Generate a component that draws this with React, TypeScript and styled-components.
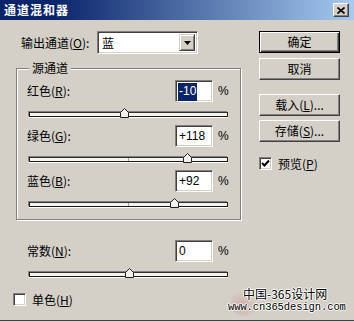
import React from "react";
import styled, { createGlobalStyle } from "styled-components";

const FACE = "#d4d0c8";
const CJK = `"Noto Sans CJK SC", "Liberation Sans", sans-serif`;
const LAT = `"Liberation Sans", "Noto Sans CJK SC", sans-serif`;

const Global = createGlobalStyle`
  html, body { margin: 0; padding: 0; background: ${FACE}; }
  body { font-family: ${CJK}; font-size: 12px; color: #000; }
  * { box-sizing: border-box; }
  u { text-decoration: underline; text-underline-offset: 1px; }
`;

const Window = styled.div`
  position: relative;
  width: 354px;
  height: 321px;
  background: ${FACE};
  display: flex;
  flex-direction: column;
  overflow: hidden;
  border-bottom: 1px solid #404040;
`;

const TitleBar = styled.div`
  height: 20px;
  flex: none;
  display: flex;
  align-items: center;
  justify-content: space-between;
  padding: 0 5px 0 4px;
  background: linear-gradient(to right, #0a246a 0%, #0a246a 15%, #a6caf0 100%);
`;

const Title = styled.div`
  color: #fff;
  font-weight: bold;
  font-size: 12px;
  letter-spacing: 1px;
  line-height: 14px;
`;

const CloseButton = styled.div`
  width: 16px;
  height: 14px;
  background: ${FACE};
  border: 1px solid;
  border-color: #fff #404040 #404040 #fff;
  box-shadow: inset -1px -1px 0 #808080;
  display: flex;
  align-items: center;
  justify-content: center;
`;

const Body = styled.div`
  display: flex;
  padding: 11px 0 0 13px;
`;

const LeftPane = styled.div`
  width: 229px;
  display: flex;
  flex-direction: column;
`;

const RightPane = styled.div`
  width: 81px;
  margin-left: 17px;
  display: flex;
  flex-direction: column;
`;

const OutputRow = styled.div`
  display: flex;
  align-items: center;
  height: 23px;
  padding-left: 8px;
`;

const LabelCell = styled.div<{ $w: number }>`
  width: ${(p) => p.$w}px;
  flex: none;
  white-space: nowrap;
  line-height: 14px;
`;

const Select = styled.div`
  width: 101px;
  height: 23px;
  display: flex;
  background: #fff;
  border: 1px solid;
  border-color: #808080 #fff #fff #808080;
  box-shadow: inset 1px 1px 0 #404040, inset -1px -1px 0 ${FACE};
  padding: 2px;
`;

const SelectValue = styled.div`
  flex: 1;
  padding-left: 2px;
  line-height: 17px;
`;

const SelectArrow = styled.div`
  width: 16px;
  background: ${FACE};
  border: 1px solid;
  border-color: ${FACE} #404040 #404040 ${FACE};
  box-shadow: inset 1px 1px 0 #fff, inset -1px -1px 0 #808080;
  display: flex;
  align-items: center;
  justify-content: center;
`;

const GroupBox = styled.div`
  position: relative;
  margin: 14px 0 0 3px;
  width: 225px;
  border: 1px solid #808080;
  box-shadow: inset 1px 1px 0 #fff, 1px 1px 0 #fff;
  padding: 11px 0 4px 10px;
`;

const Legend = styled.div`
  position: absolute;
  top: -8px;
  left: 12px;
  padding: 0 3px;
  background: ${FACE};
  line-height: 14px;
`;

const Block = styled.div<{ $h?: number }>`
  height: ${(p) => (p.$h ? `${p.$h}px` : "auto")};
  display: flex;
  flex-direction: column;
`;

const ValueRow = styled.div`
  display: flex;
  align-items: center;
  height: 22px;
`;

const NumBox = styled.div`
  width: 38px;
  height: 22px;
  flex: none;
  background: #fff;
  border: 1px solid;
  border-color: #808080 #fff #fff #808080;
  box-shadow: inset 1px 1px 0 #404040, inset -1px -1px 0 ${FACE};
  padding: 2px 0 0 2px;
  font-family: ${LAT};
  font-size: 12px;
  line-height: 16px;
  display: flex;
`;

const Selected = styled.span`
  background: #0a246a;
  color: #fff;
  padding: 0 1px;
`;

const Plain = styled.span`
  padding: 0 1px;
`;

const Percent = styled.div`
  margin-left: 5px;
  font-family: ${LAT};
  font-size: 12px;
`;

const SliderArea = styled.div`
  position: relative;
  margin: 6px 0 0 2px;
  width: 199px;
  height: 12px;
  padding-top: 4px;
`;

const Track = styled.div`
  position: relative;
  height: 5px;
  background: #f4f3ef;
  border: 1px solid #1a1a1a;
  border-top-color: #303030;
  box-shadow: 0 1px 0 #fff, -1px -1px 0 #808080;
`;

const CenterTick = styled.div`
  position: absolute;
  left: 98px;
  top: 0;
  width: 1px;
  height: 3px;
  background: #a0a0a0;
`;

const Thumb = styled.svg`
  position: absolute;
  top: 0;
  width: 9px;
  height: 10px;
`;

const ConstantBlock = styled.div`
  margin-top: 20px;
  padding-left: 14px;
  display: flex;
  flex-direction: column;
`;

const CheckRow = styled.div<{ $mt: number; $pl?: number }>`
  display: flex;
  align-items: center;
  margin-top: ${(p) => p.$mt}px;
  padding-left: ${(p) => p.$pl ?? 0}px;
  height: 13px;
`;

const CheckBox = styled.div`
  width: 13px;
  height: 13px;
  background: #fff;
  border: 1px solid;
  border-color: #808080 #fff #fff #808080;
  box-shadow: inset 1px 1px 0 #404040, inset -1px -1px 0 ${FACE};
  display: flex;
  align-items: center;
  justify-content: center;
`;

const CheckLabel = styled.div`
  margin-left: 6px;
  line-height: 14px;
`;

const Button = styled.div<{ $mt: number; $default?: boolean }>`
  height: 22px;
  margin-top: ${(p) => p.$mt}px;
  display: flex;
  align-items: center;
  justify-content: center;
  line-height: 14px;
  border: 1px solid;
  border-color: ${(p) => (p.$default ? "#000" : "#fff #404040 #404040 #fff")};
  box-shadow: ${(p) =>
    p.$default
      ? "inset 1px 1px 0 #fff, inset -1px -1px 0 #404040, inset -2px -2px 0 #808080"
      : `inset -1px -1px 0 #808080, inset 1px 1px 0 ${FACE}`};
`;

const Watermark = styled.div`
  position: absolute;
  left: 228px;
  top: 286px;
  width: 124px;
  display: flex;
  flex-direction: column;
  align-items: flex-start;
`;

const WmGhost = styled.div`
  position: absolute;
  left: 2px;
  top: 4px;
  width: 30px;
  height: 26px;
  border-radius: 50%;
  background: radial-gradient(circle at 40% 60%, rgba(200, 120, 110, 0.35), rgba(200, 120, 110, 0) 70%);
`;

const WmTitle = styled.div`
  position: relative;
  margin-left: 15px;
  font-size: 12px;
  line-height: 15px;
  text-shadow: 1px 0 0 #fff, -1px 0 0 #fff, 0 1px 0 #fff, 0 -1px 0 #fff;
`;

const WmUrl = styled.div`
  position: relative;
  font-family: "Liberation Mono", monospace;
  font-size: 10.5px;
  line-height: 12px;
  letter-spacing: -0.1px;
  text-shadow: 1px 0 0 #fff, -1px 0 0 #fff, 0 1px 0 #fff, 0 -1px 0 #fff;
`;

type Channel = { name: string; key: string; value: string; num: number; selected?: boolean };

const channels: Channel[] = [
  { name: "红色", key: "R", value: "-10", num: -10, selected: true },
  { name: "绿色", key: "G", value: "+118", num: 118 },
  { name: "蓝色", key: "B", value: "+92", num: 92 },
];

function Slider({ value }: { value: number }) {
  const left = Math.round(((value + 200) / 400) * 199) - 4;
  return (
    <SliderArea>
      <Track>
        <CenterTick />
      </Track>
      <Thumb viewBox="0 0 9 10" style={{ left }}>
        <polygon points="0.5,9.5 0.5,4.5 4.5,0.5 8.5,4.5 8.5,9.5" fill="#f2f0ec" stroke="#202020" strokeWidth="1" />
      </Thumb>
    </SliderArea>
  );
}

function Check() {
  return (
    <svg width="9" height="9" viewBox="0 0 9 9">
      <path d="M1 4 L3.5 6.5 L8 1.5" fill="none" stroke="#000" strokeWidth="2" />
    </svg>
  );
}

export default function App() {
  return (
    <>
      <Global />
      <Window>
        <TitleBar>
          <Title>通道混和器</Title>
          <CloseButton>
            <svg width="8" height="7" viewBox="0 0 8 7">
              <path d="M0.5 0.5 L7.5 6.5 M7.5 0.5 L0.5 6.5" stroke="#000" strokeWidth="1.6" />
            </svg>
          </CloseButton>
        </TitleBar>
        <Body>
          <LeftPane>
            <OutputRow>
              <LabelCell $w={76}>
                输出通道(<u>O</u>):
              </LabelCell>
              <Select>
                <SelectValue>蓝</SelectValue>
                <SelectArrow>
                  <svg width="7" height="4" viewBox="0 0 7 4">
                    <polygon points="0,0 7,0 3.5,4" fill="#000" />
                  </svg>
                </SelectArrow>
              </Select>
            </OutputRow>
            <GroupBox>
              <Legend>源通道</Legend>
              {channels.map((c) => (
                <Block key={c.key} $h={45}>
                  <ValueRow>
                    <LabelCell $w={148}>
                      {c.name}(<u>{c.key}</u>):
                    </LabelCell>
                    <NumBox>{c.selected ? <Selected>{c.value}</Selected> : <Plain>{c.value}</Plain>}</NumBox>
                    <Percent>%</Percent>
                  </ValueRow>
                  <Slider value={c.num} />
                </Block>
              ))}
            </GroupBox>
            <ConstantBlock>
              <ValueRow>
                <LabelCell $w={148}>
                  常数(<u>N</u>):
                </LabelCell>
                <NumBox>
                  <Plain>0</Plain>
                </NumBox>
                <Percent>%</Percent>
              </ValueRow>
              <Slider value={0} />
            </ConstantBlock>
            <CheckRow $mt={13}>
              <CheckBox />
              <CheckLabel>
                单色(<u>H</u>)
              </CheckLabel>
            </CheckRow>
          </LeftPane>
          <RightPane>
            <Button $mt={0} $default>
              确定
            </Button>
            <Button $mt={5}>取消</Button>
            <Button $mt={14}>
              载入(<u>L</u>)...
            </Button>
            <Button $mt={4}>
              存储(<u>S</u>)...
            </Button>
            <CheckRow $mt={15}>
              <CheckBox>
                <Check />
              </CheckBox>
              <CheckLabel>
                预览(<u>P</u>)
              </CheckLabel>
            </CheckRow>
          </RightPane>
        </Body>
        <Watermark>
          <WmGhost />
          <WmTitle>中国-365设计网</WmTitle>
          <WmUrl>www.cn365design.com</WmUrl>
        </Watermark>
      </Window>
    </>
  );
}
